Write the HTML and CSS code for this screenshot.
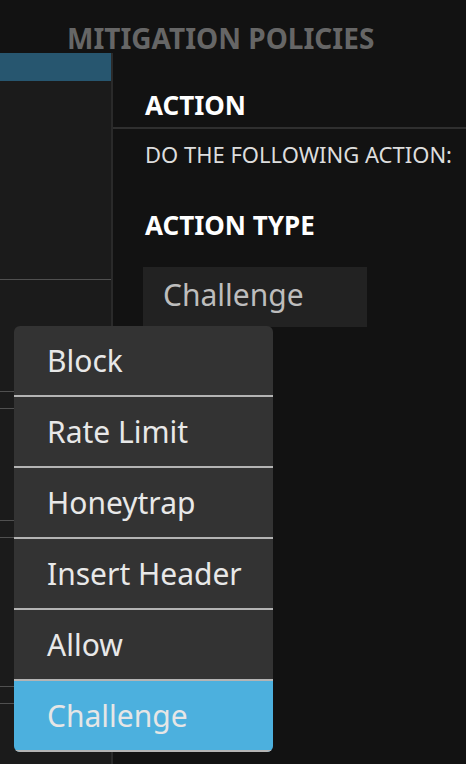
FILE: index.html
```html
<!DOCTYPE html>
<html>
<head>
<meta charset="utf-8">
<link rel="stylesheet" href="styles.css">
</head>
<body>
<div class="page">
  <header class="page-title">MITIGATION POLICIES</header>
  <div class="main">
    <aside class="nav">
      <div class="nav-head"></div>
      <div class="nav-row r1"></div>
      <div class="nav-row r2"></div>
      <div class="nav-row r3"></div>
      <div class="nav-row r2"></div>
      <div class="nav-row r3"></div>
      <div class="nav-row r4"></div>
      <div class="nav-row r3"></div>
    </aside>
    <section class="content">
      <h2 class="section-head">ACTION</h2>
      <p class="section-desc">DO THE FOLLOWING ACTION:</p>
      <h3 class="field-label">ACTION TYPE</h3>
      <div class="select">Challenge</div>
    </section>
  </div>
  <ul class="menu">
    <li class="menu-item">Block</li>
    <li class="menu-item">Rate Limit</li>
    <li class="menu-item">Honeytrap</li>
    <li class="menu-item">Insert Header</li>
    <li class="menu-item">Allow</li>
    <li class="menu-item selected">Challenge</li>
  </ul>
</div>
</body>
</html>
```
FILE: styles.css
```css
html, body {
  margin: 0;
  padding: 0;
  height: 100%;
  background: #121212;
  font-family: "Noto Sans", "Open Sans", sans-serif;
  overflow: hidden;
}
.page {
  position: relative;
  height: 764px;
  display: flex;
  flex-direction: column;
}
.page-title {
  padding: 24px 0 1px 67px;
  height: 28px;
  font-size: 28px;
  line-height: 28px;
  font-weight: 700;
  color: #666666;
}
.main {
  flex: 1;
  display: flex;
}
.nav {
  width: 111px;
  border-right: 2px solid #2a2a2a;
  background: #1b1b1b;
  display: flex;
  flex-direction: column;
}
.nav-head {
  height: 28px;
  background: #27566f;
}
.nav-row {
  border-bottom: 1px solid #505050;
}
.r1 { height: 198px; }
.r2 { height: 111px; }
.r3 { height: 16px; }
.r4 { height: 148px; }
.content {
  flex: 1;
  display: flex;
  flex-direction: column;
  align-items: flex-start;
}
.section-head {
  margin: 0;
  align-self: stretch;
  padding: 39px 0 9px 32px;
  font-size: 26px;
  line-height: 26px;
  font-weight: 700;
  color: #ffffff;
  border-bottom: 2px solid #2f2f2f;
}
.section-desc {
  margin: 14px 0 0 32px;
  font-size: 22px;
  line-height: 22px;
  color: #dddddd;
}
.field-label {
  margin: 47px 0 0 32px;
  font-size: 26px;
  line-height: 26px;
  font-weight: 700;
  color: #ffffff;
}
.select {
  margin: 29px 0 0 30px;
  width: 204px;
  padding: 0 0 5px 20px;
  height: 55px;
  line-height: 55px;
  font-size: 30px;
  color: #bdbdbd;
  background: #222222;
}
.menu {
  position: absolute;
  left: 14px;
  top: 326px;
  width: 259px;
  margin: 0;
  padding: 0;
  list-style: none;
  background: #333333;
  border-radius: 6px;
  overflow: hidden;
}
.menu-item {
  height: 69px;
  line-height: 69px;
  padding-left: 33px;
  font-size: 30px;
  color: #e8e8e8;
  border-bottom: 2px solid #b4b4b4;
}
.menu-item.selected {
  background: #4cb0de;
  color: #e6e6e6;
}
```
